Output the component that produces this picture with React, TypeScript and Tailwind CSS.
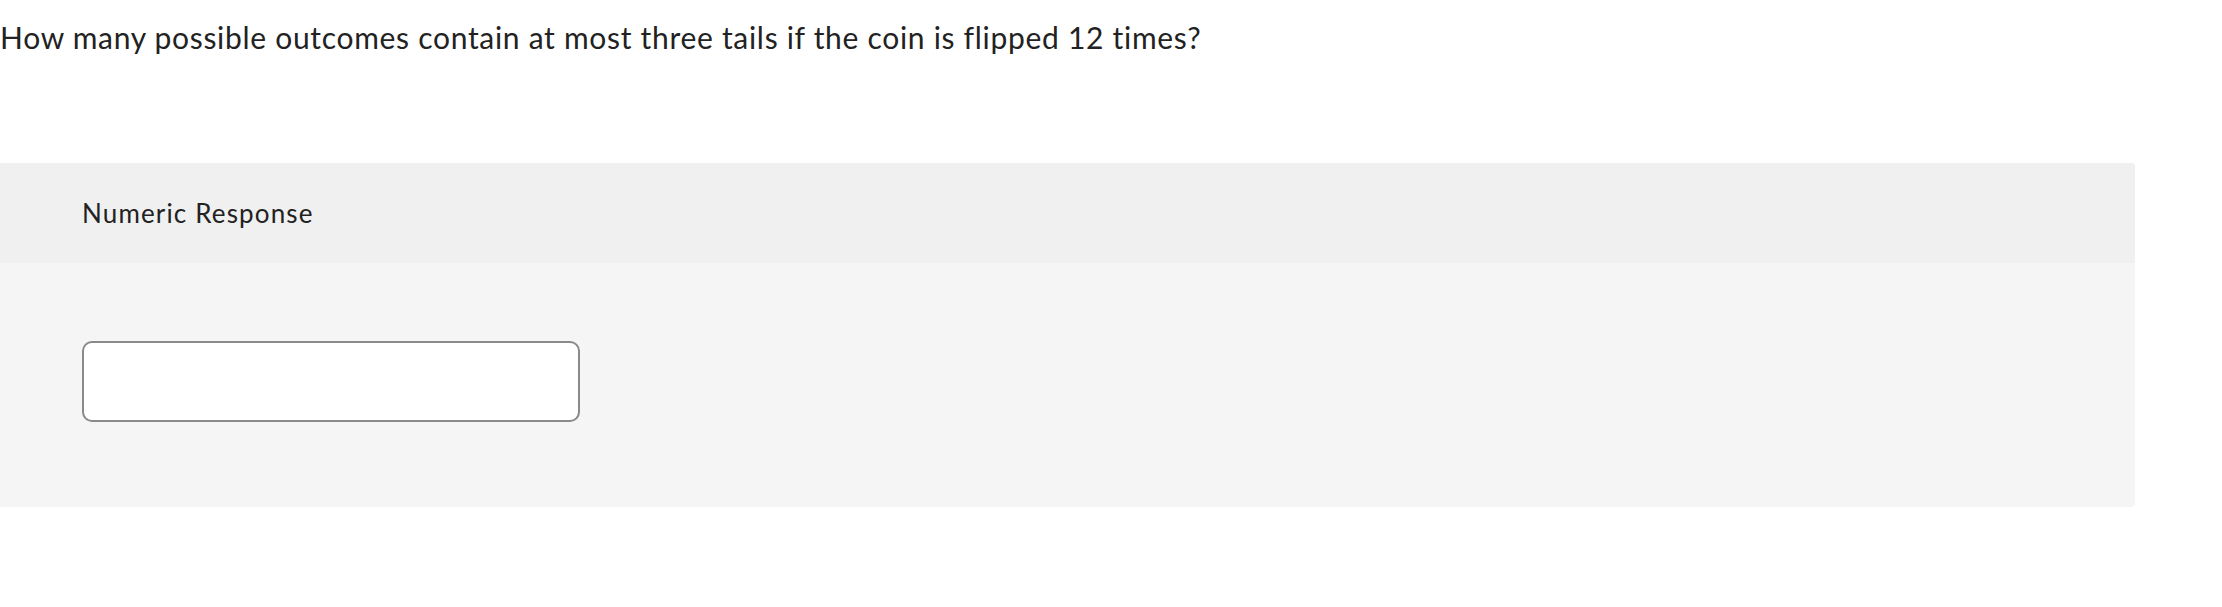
export default function App() {
  return (
    <div className="min-h-screen bg-white font-['Lato','Noto_Sans',sans-serif] text-[#222]">
      <p className="pt-[19px] text-[30px] leading-[37px] tracking-[0.7px]">
        How many possible outcomes contain at most three tails if the coin is flipped 12 times?
      </p>
      <section className="mt-[107px] w-[2135px] overflow-hidden rounded-r-[4px] bg-[#f5f5f5]">
        <div className="flex h-[100px] items-center bg-[#f0f0f0] pl-[82px] text-[26px] tracking-[1.15px]">
          Numeric Response
        </div>
        <div className="pl-[82px] pt-[78px] pb-[85px]">
          <input
            type="text"
            className="block h-[81px] w-[498px] rounded-[10px] border-2 border-[#8a8a8a] bg-white"
          />
        </div>
      </section>
    </div>
  );
}
